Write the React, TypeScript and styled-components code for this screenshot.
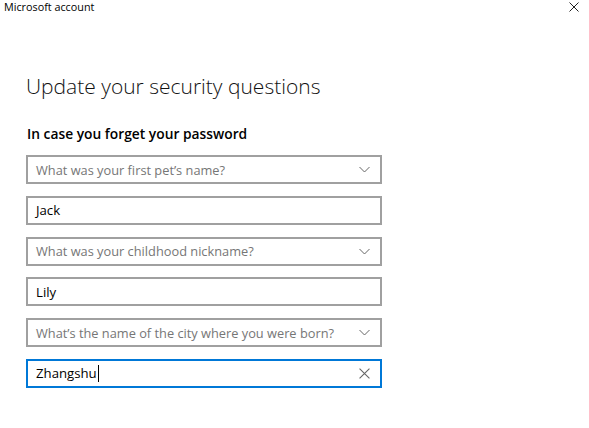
import React from 'react';
import styled, { createGlobalStyle } from 'styled-components';

const GlobalStyle = createGlobalStyle`
  html, body {
    margin: 0;
    padding: 0;
    background: #fff;
    font-family: "Open Sans", "Noto Sans", sans-serif;
    color: #000;
  }
`;

const Window = styled.div`
  width: 589px;
  height: 428px;
  background: #fff;
  overflow: hidden;
`;

const TitleBar = styled.div`
  display: flex;
  justify-content: space-between;
  align-items: center;
  height: 14px;
  padding: 0 8px 0 4px;
`;

const TitleText = styled.span`
  font-size: 10.8px;
  line-height: 14px;
  color: #000;
`;

const CloseButton = styled.button`
  display: flex;
  align-items: center;
  justify-content: center;
  border: none;
  background: none;
  padding: 0;
  width: 14px;
  height: 14px;
  cursor: pointer;
`;

const Content = styled.div`
  padding: 57px 26px 0 26px;
`;

const Heading = styled.h1`
  margin: 0;
  font-size: 21px;
  font-weight: 300;
  line-height: 30px;
  color: #111;
`;

const SubHeading = styled.h2`
  margin: 24px 0 0 1px;
  font-size: 13.8px;
  font-weight: 600;
  line-height: 18px;
  color: #000;
`;

const Fields = styled.div`
  display: flex;
  flex-direction: column;
  gap: 11.8px;
  margin-top: 12px;
  width: 356px;
`;

const Field = styled.div<{ $focused?: boolean }>`
  display: flex;
  align-items: center;
  box-sizing: border-box;
  height: 29px;
  padding: 0 10px 0 8px;
  border: 2px solid ${(p) => (p.$focused ? '#0078d7' : '#a0a0a0')};
  background: #fff;
`;

const FieldText = styled.span<{ $placeholder?: boolean }>`
  flex: 1;
  font-size: ${(p) => (p.$placeholder ? '12.8px' : '13.2px')};
  line-height: 20px;
  color: ${(p) => (p.$placeholder ? '#767676' : '#000')};
  white-space: nowrap;
`;

const Caret = styled.span`
  display: inline-block;
  width: 1px;
  height: 17px;
  background: #000;
  vertical-align: -4px;
  margin-left: 1px;
`;

const Chevron = () => (
  <svg width="11" height="7" viewBox="0 0 11 7">
    <path d="M0.5 1 L5.5 6 L10.5 1" fill="none" stroke="#666" strokeWidth="1" />
  </svg>
);

const Cross = ({ size, color }: { size: number; color: string }) => (
  <svg width={size} height={size} viewBox="0 0 10 10">
    <path d="M0.5 0.5 L9.5 9.5 M9.5 0.5 L0.5 9.5" fill="none" stroke={color} strokeWidth="1" />
  </svg>
);

const questions = [
  { question: 'What was your first pet\u2019s name?', answer: 'Jack' },
  { question: 'What was your childhood nickname?', answer: 'Lily' },
  { question: 'What\u2019s the name of the city where you were born?', answer: 'Zhangshu' },
];

const App: React.FC = () => {
  return (
    <Window>
      <GlobalStyle />
      <TitleBar>
        <TitleText>Microsoft account</TitleText>
        <CloseButton aria-label="Close">
          <Cross size={10} color="#222" />
        </CloseButton>
      </TitleBar>
      <Content>
        <Heading>Update your security questions</Heading>
        <SubHeading>In case you forget your password</SubHeading>
        <Fields>
          {questions.map((q, i) => {
            const last = i === questions.length - 1;
            return (
              <React.Fragment key={q.question}>
                <Field>
                  <FieldText $placeholder>{q.question}</FieldText>
                  <Chevron />
                </Field>
                <Field $focused={last}>
                  <FieldText>
                    {q.answer}
                    {last && <Caret />}
                  </FieldText>
                  {last && <Cross size={11} color="#666" />}
                </Field>
              </React.Fragment>
            );
          })}
        </Fields>
      </Content>
    </Window>
  );
};

export default App;
